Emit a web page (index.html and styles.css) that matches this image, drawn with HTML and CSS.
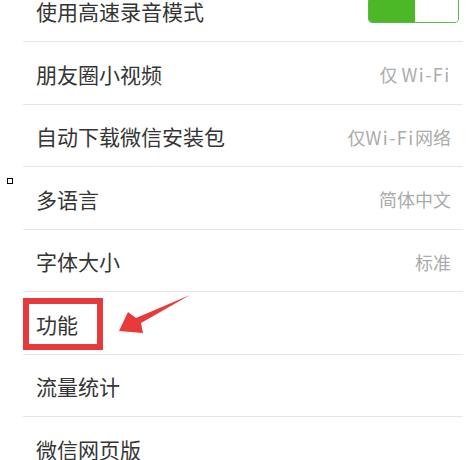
FILE: index.html
```html
<!DOCTYPE html>
<html lang="zh-CN">
<head>
<meta charset="utf-8">
<title>设置</title>
<link rel="stylesheet" href="styles.css">
</head>
<body>
<div class="screen">
  <ul class="list">
    <li class="row">
      <span class="label">使用高速录音模式</span>
      <span class="switch"><span class="switch-on"></span><span class="switch-off"></span></span>
    </li>
    <li class="row">
      <span class="label">朋友圈小视频</span>
      <span class="value">仅 <span class="latin">Wi-Fi</span></span>
    </li>
    <li class="row">
      <span class="label">自动下载微信安装包</span>
      <span class="value">仅<span class="latin">Wi-Fi</span>网络</span>
    </li>
    <li class="row">
      <span class="label">多语言</span>
      <span class="value">简体中文</span>
    </li>
    <li class="row">
      <span class="label">字体大小</span>
      <span class="value">标准</span>
    </li>
    <li class="row">
      <span class="label">功能</span>
    </li>
    <li class="row">
      <span class="label">流量统计</span>
    </li>
    <li class="row">
      <span class="label">微信网页版</span>
    </li>
  </ul>
  <span class="marker-square"></span>
  <span class="highlight-box"></span>
  <svg class="arrow" viewBox="0 0 80 44" width="80" height="44" aria-hidden="true">
    <polygon points="1,39 10,20 18,26 72,3 23,31 25,41" fill="#e8393b"/>
  </svg>
</div>
</body>
</html>
```

FILE: styles.css
```css
html, body {
  margin: 0;
  padding: 0;
  background: #ffffff;
}

.screen {
  position: relative;
  width: 471px;
  height: 460px;
  overflow: hidden;
  font-family: "Noto Sans CJK SC", "Noto Sans", sans-serif;
}

.list {
  list-style: none;
  margin: -20.5px 8px 0 23px;
  padding: 0;
}

.row {
  display: flex;
  align-items: center;
  justify-content: space-between;
  box-sizing: border-box;
  height: 62.5px;
  padding: 0 12px 0 13px;
  border-bottom: 1px solid #e6e6e6;
}

.label {
  font-size: 21px;
  color: #353535;
  line-height: 1;
  padding-top: 3px;
}

.value {
  font-size: 18px;
  color: #ababab;
  line-height: 1;
  padding-top: 3px;
}

.latin {
  letter-spacing: 1.4px;
  padding-right: 0.5px;
}

.switch {
  display: flex;
  width: 91px;
  height: 26px;
  margin-right: -8px;
  margin-top: -1px;
  border: 1px solid #5bb842;
  border-radius: 4px;
  box-sizing: border-box;
  overflow: hidden;
}

.switch-on {
  flex: 0 0 46px;
  background: #4cb828;
}

.switch-off {
  flex: 1;
  background: #ffffff;
}

.marker-square {
  position: absolute;
  left: 7px;
  top: 178px;
  width: 6px;
  height: 6px;
  box-sizing: border-box;
  border: 1px solid #000000;
  background: #ffffff;
}

.highlight-box {
  position: absolute;
  left: 23px;
  top: 298px;
  width: 80px;
  height: 52px;
  box-sizing: border-box;
  border: 6px solid #e53a3c;
}

.arrow {
  position: absolute;
  left: 118px;
  top: 292px;
}
```
